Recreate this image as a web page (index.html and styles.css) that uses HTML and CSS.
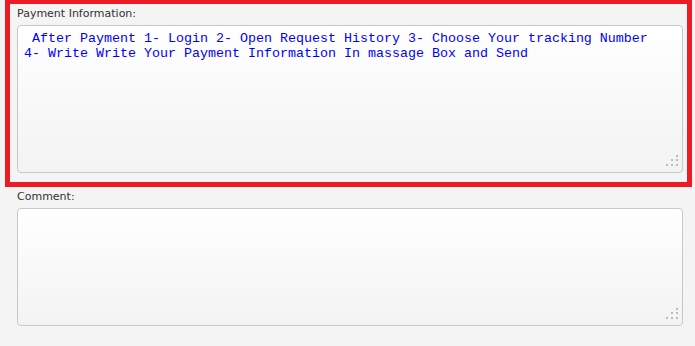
FILE: index.html
```html
<!doctype html>
<html>
<head>
  <meta charset="utf-8">
  <title>Payment</title>
  <link rel="stylesheet" href="styles.css">
</head>
<body>
  <div class="highlight">
    <label class="label" for="payment">Payment Information:</label>
    <div class="field">
      <textarea id="payment" class="box box-tall"> After Payment 1- Login 2- Open Request History 3- Choose Your tracking Number
4- Write Write Your Payment Information In massage Box and Send</textarea>
      <svg class="grip" width="12" height="11" viewBox="0 0 12 11">
        <rect x="10" y="0" width="2" height="2"/>
        <rect x="5" y="4" width="2" height="2"/>
        <rect x="10" y="4" width="2" height="2"/>
        <rect x="0" y="9" width="2" height="2"/>
        <rect x="5" y="9" width="2" height="2"/>
        <rect x="10" y="9" width="2" height="2"/>
      </svg>
    </div>
  </div>

  <div class="section">
    <label class="label" for="comment">Comment:</label>
    <div class="field">
      <textarea id="comment" class="box box-short"></textarea>
      <svg class="grip" width="12" height="11" viewBox="0 0 12 11">
        <rect x="10" y="0" width="2" height="2"/>
        <rect x="5" y="4" width="2" height="2"/>
        <rect x="10" y="4" width="2" height="2"/>
        <rect x="0" y="9" width="2" height="2"/>
        <rect x="5" y="9" width="2" height="2"/>
        <rect x="10" y="9" width="2" height="2"/>
      </svg>
    </div>
  </div>
</body>
</html>
```

FILE: styles.css
```css
body {
  margin: 0;
  background-color: #f4f4f4;
  font-family: "DejaVu Sans", Verdana, sans-serif;
  font-size: 11px;
  color: #333;
}
.highlight {
  margin: -1px 3px 0 5px;
  padding: 3px 4px 9px 7px;
  border: 5px solid #ed1c24;
}
.section {
  padding: 3px 0 0 17px;
}
.label {
  display: block;
  line-height: 14px;
  margin-bottom: 4px;
}
.field {
  position: relative;
  width: 666px;
}
.box {
  display: block;
  box-sizing: border-box;
  width: 666px;
  margin: 0;
  padding: 5px 6px;
  border: 1px solid #c8c8c8;
  border-radius: 4px;
  background: linear-gradient(#fff, #f3f3f3);
  color: #00f;
  font-family: "Liberation Mono", "Courier New", monospace;
  font-size: 13.33px;
  line-height: 15px;
  resize: none;
  overflow: hidden;
  outline: none;
}
.box-tall {
  height: 148px;
}
.box-short {
  height: 118px;
}
.grip {
  position: absolute;
  right: 5px;
  bottom: 7px;
  fill: #bcbcbc;
}
```
